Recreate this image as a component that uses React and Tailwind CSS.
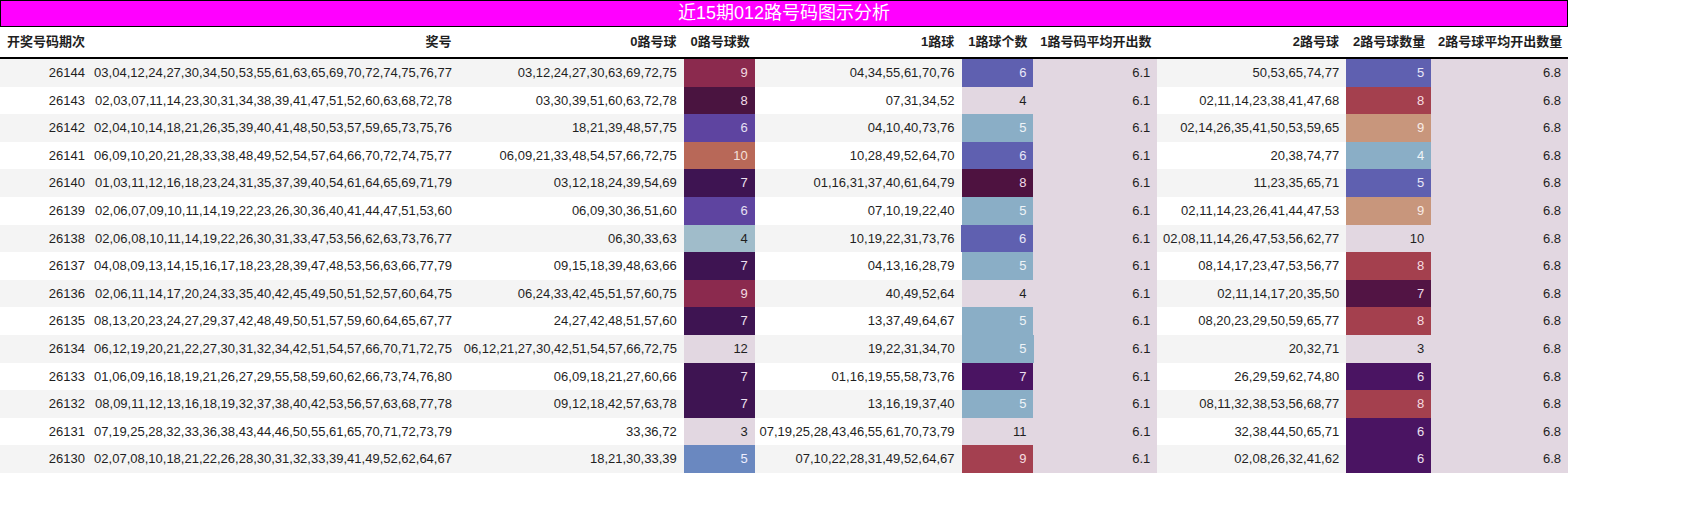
const C = {
  L: ["#e2d7e1", "#1f1f1f"],
  r9: ["#8b2a4e", "#f3dde3"],
  d8: ["#4a1440", "#f0dce8"],
  p6: ["#5e44a0", "#e6e0f4"],
  o10: ["#b86858", "#f6e0da"],
  d7: ["#3e1452", "#ece0f0"],
  t4: ["#a0bcca", "#1f1f1f"],
  b5: ["#6a88c0", "#eef"],
  bl6: ["#5f60b0", "#e8e8f8"],
  lb5: ["#8aaec6", "#eef4f8"],
  dm8: ["#4e1240", "#f0dce8"],
  v7: ["#4a1462", "#ece0f0"],
  rd9: ["#a44050", "#f6dde0"],
  rd8: ["#a4404e", "#f6dde0"],
  tan9: ["#c8967c", "#f8ece6"],
  lb4: ["#8aaec6", "#eef4f8"],
  dm7: ["#521444", "#f0dce8"],
  v6: ["#4a1462", "#ece0f0"],
};
const rows = [
  ["26144","03,04,12,24,27,30,34,50,53,55,61,63,65,69,70,72,74,75,76,77","03,12,24,27,30,63,69,72,75","9","r9","04,34,55,61,70,76","6","bl6","50,53,65,74,77","5","bl6"],
  ["26143","02,03,07,11,14,23,30,31,34,38,39,41,47,51,52,60,63,68,72,78","03,30,39,51,60,63,72,78","8","d8","07,31,34,52","4","L","02,11,14,23,38,41,47,68","8","rd8"],
  ["26142","02,04,10,14,18,21,26,35,39,40,41,48,50,53,57,59,65,73,75,76","18,21,39,48,57,75","6","p6","04,10,40,73,76","5","lb5","02,14,26,35,41,50,53,59,65","9","tan9"],
  ["26141","06,09,10,20,21,28,33,38,48,49,52,54,57,64,66,70,72,74,75,77","06,09,21,33,48,54,57,66,72,75","10","o10","10,28,49,52,64,70","6","bl6","20,38,74,77","4","lb4"],
  ["26140","01,03,11,12,16,18,23,24,31,35,37,39,40,54,61,64,65,69,71,79","03,12,18,24,39,54,69","7","d7","01,16,31,37,40,61,64,79","8","dm8","11,23,35,65,71","5","bl6"],
  ["26139","02,06,07,09,10,11,14,19,22,23,26,30,36,40,41,44,47,51,53,60","06,09,30,36,51,60","6","p6","07,10,19,22,40","5","lb5","02,11,14,23,26,41,44,47,53","9","tan9"],
  ["26138","02,06,08,10,11,14,19,22,26,30,31,33,47,53,56,62,63,73,76,77","06,30,33,63","4","t4","10,19,22,31,73,76","6","bl6","02,08,11,14,26,47,53,56,62,77","10","L"],
  ["26137","04,08,09,13,14,15,16,17,18,23,28,39,47,48,53,56,63,66,77,79","09,15,18,39,48,63,66","7","d7","04,13,16,28,79","5","lb5","08,14,17,23,47,53,56,77","8","rd8"],
  ["26136","02,06,11,14,17,20,24,33,35,40,42,45,49,50,51,52,57,60,64,75","06,24,33,42,45,51,57,60,75","9","r9","40,49,52,64","4","L","02,11,14,17,20,35,50","7","dm7"],
  ["26135","08,13,20,23,24,27,29,37,42,48,49,50,51,57,59,60,64,65,67,77","24,27,42,48,51,57,60","7","d7","13,37,49,64,67","5","lb5","08,20,23,29,50,59,65,77","8","rd8"],
  ["26134","06,12,19,20,21,22,27,30,31,32,34,42,51,54,57,66,70,71,72,75","06,12,21,27,30,42,51,54,57,66,72,75","12","L","19,22,31,34,70","5","lb5","20,32,71","3","L"],
  ["26133","01,06,09,16,18,19,21,26,27,29,55,58,59,60,62,66,73,74,76,80","06,09,18,21,27,60,66","7","d7","01,16,19,55,58,73,76","7","v7","26,29,59,62,74,80","6","v6"],
  ["26132","08,09,11,12,13,16,18,19,32,37,38,40,42,53,56,57,63,68,77,78","09,12,18,42,57,63,78","7","d7","13,16,19,37,40","5","lb5","08,11,32,38,53,56,68,77","8","rd8"],
  ["26131","07,19,25,28,32,33,36,38,43,44,46,50,55,61,65,70,71,72,73,79","33,36,72","3","L","07,19,25,28,43,46,55,61,70,73,79","11","L","32,38,44,50,65,71","6","v6"],
  ["26130","02,07,08,10,18,21,22,26,28,30,31,32,33,39,41,49,52,62,64,67","18,21,30,33,39","5","b5","07,10,22,28,31,49,52,64,67","9","rd9","02,08,26,32,41,62","6","v6"],
];
const heads = ["开奖号码期次","奖号","0路号球","0路号球数","1路球","1路球个数","1路号码平均开出数","2路号球","2路号球数量","2路号球平均开出数量"];
const widths = [92,367,225,71,207,72,124,189,85,137];
const font = { fontFamily: '"Liberation Sans","Noto Sans CJK SC",sans-serif' };

export default function App() {
  return (
    <div className="w-[1700px] h-[515px] bg-white text-[13px] text-[#1f1f1f]" style={font}>
      <div className="w-[1568px]">
        <div className="h-[27px] bg-[#ff00ff] border border-black flex items-center justify-center text-white text-[18px]">近15期012路号码图示分析</div>
        <div className="flex h-[32px] items-center border-b-2 border-black font-bold">
          {heads.map((h, i) => (
            <div key={i} style={{ width: widths[i] }} className={"px-[7px] whitespace-nowrap " + (i === 0 ? "text-left" : "text-right")}>{h}</div>
          ))}
        </div>
        {rows.map((r, ri) => {
          const bg = ri % 2 === 0 ? "bg-[#f4f4f4]" : "bg-white";
          const cells = [
            [r[0]], [r[1]], [r[2]], [r[3], C[r[4]]], [r[5]], [r[6], C[r[7]]], ["6.1", C.L], [r[8]], [r[9], C[r[10]]], ["6.8", C.L],
          ];
          return (
            <div key={ri} className={"flex h-[27.6px] " + bg}>
              {cells.map((c, i) => (
                <div key={i} style={{ width: widths[i], background: c[1] ? c[1][0] : undefined, color: c[1] ? c[1][1] : undefined }}
                  className="px-[7px] flex items-center justify-end whitespace-nowrap">{c[0]}</div>
              ))}
            </div>
          );
        })}
      </div>
    </div>
  );
}
